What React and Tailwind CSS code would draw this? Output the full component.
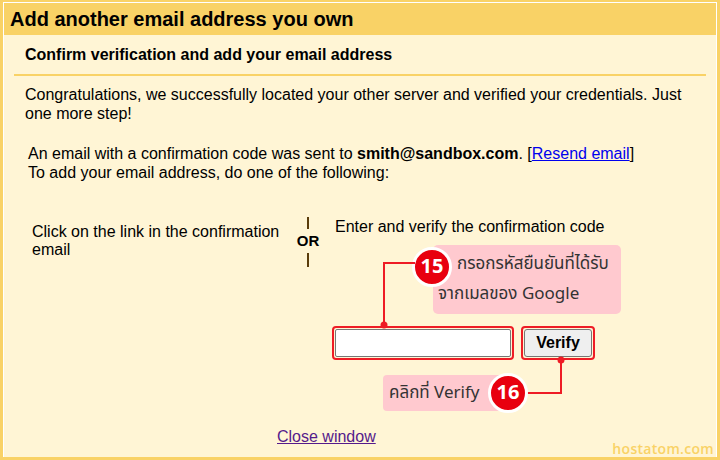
import React from "react";

const arial = { fontFamily: '"Liberation Sans", Arial, sans-serif' };
const thai = { fontFamily: '"Noto Sans Thai", "Noto Sans Thai UI", "Noto Sans", "Liberation Sans", sans-serif' };

function Badge({ n }) {
  return (
    <div className="w-[40px] h-[40px] rounded-full bg-[#e8000f] border-[3px] border-white flex items-center justify-center text-white text-[20px] font-bold" style={thai}>
      {n}
    </div>
  );
}

export default function App() {
  return (
    <div className="w-[720px] h-[460px] bg-[#f9d266] pt-[2px] pl-[3px] pr-[3px] pb-[3px] overflow-hidden" style={arial}>
      <div className="relative h-full border-t border-l border-r border-white bg-[#fff5d5] text-black">
        <div className="h-[32px] bg-[#f9d266] pl-[6px] flex items-center">
          <h1 className="text-[20px] font-bold leading-none">Add another email address you own</h1>
        </div>
        <div className="px-[10px]">
          <div className="pt-[11px] pb-[11px] pl-[11px] border-b-2 border-[#f9d266] text-[16px] font-bold leading-[17px]">
            Confirm verification and add your email address
          </div>
          <p className="mt-[9px] pl-[11px] text-[16px] leading-[19px] pr-[20px]">
            Congratulations, we successfully located your other server and verified your credentials. Just one more step!
          </p>
          <p className="mt-[21px] pl-[14px] text-[16px] leading-[19px]">
            An email with a confirmation code was sent to <b>smith@sandbox.com</b>. [<a href="#" className="text-[#0000ee] underline">Resend email</a>]
            <br />
            To add your email address, do one of the following:
          </p>
          <div className="mt-[35px] flex">
            <div className="w-[279px] pl-[18px] pt-[6px] text-[16px] leading-[18px]">
              Click on the link in the confirmation email
            </div>
            <div className="w-[30px] flex flex-col items-center">
              <div className="w-[2px] h-[12px] bg-[#5a3c0a]" />
              <div className="text-[15px] font-bold leading-[24px]">OR</div>
              <div className="w-[2px] h-[14px] bg-[#5a3c0a]" />
            </div>
            <div className="pl-[12px] text-[16px] leading-[18px] pt-[1px]">
              Enter and verify the confirmation code
            </div>
          </div>
          <div className="mt-[59px] ml-[318px] flex gap-[7px]">
            <div className="border-2 border-[#ee1c25] rounded-[4px] p-[1px]">
              <input className="block w-[176px] h-[28px] bg-white border border-[#767676] rounded-[2px]" />
            </div>
            <div className="border-2 border-[#ee1c25] rounded-[4px] p-[1px]">
              <button className="w-[68px] h-[28px] bg-[#efefef] border border-[#767676] rounded-[3px] text-[16px] font-bold">Verify</button>
            </div>
          </div>
          <div className="mt-[65px] ml-[263px]">
            <a href="#" className="text-[#551a8b] underline text-[16px] leading-[19px]">Close window</a>
          </div>
        </div>

        {/* Annotation 15 */}
        <div className="absolute left-[429px] top-[242px] w-[188px] h-[69px] bg-[#ffc9cf] rounded-[5px] text-[#333] text-[17px] leading-[30px] pl-[24px] pt-[4px]" style={thai}>
          กรอกรหัสยืนยันที่ได้รับ
          <br />
          <span className="-ml-[19px]">จากเมลของ Google</span>
        </div>
        <div className="absolute left-[408px] top-[244px]"><Badge n="15" /></div>
        <svg className="absolute left-0 top-0 pointer-events-none" width="720" height="460">
          <polyline points="411,260 380,260 380,322" fill="none" stroke="#ee1c25" strokeWidth="2" />
          <circle cx="380" cy="322" r="3.5" fill="#ee1c25" />
          <polyline points="522,390 557,390 557,357" fill="none" stroke="#ee1c25" strokeWidth="2" />
          <circle cx="557" cy="357" r="3.5" fill="#ee1c25" />
        </svg>

        {/* Annotation 16 */}
        <div className="absolute left-[379px] top-[372px] w-[124px] h-[36px] bg-[#ffc9cf] rounded-[4px] text-[#333] text-[17px] leading-[36px] pl-[6px]" style={thai}>
          คลิกที่ Verify
        </div>
        <div className="absolute left-[484px] top-[370px]"><Badge n="16" /></div>

        <div className="absolute right-[2px] bottom-[-2px] text-[14px] text-[#f9d266] font-semibold tracking-[0.3px]" style={{ fontFamily: '"Open Sans", sans-serif' }}>
          hostatom.com
        </div>
      </div>
    </div>
  );
}
